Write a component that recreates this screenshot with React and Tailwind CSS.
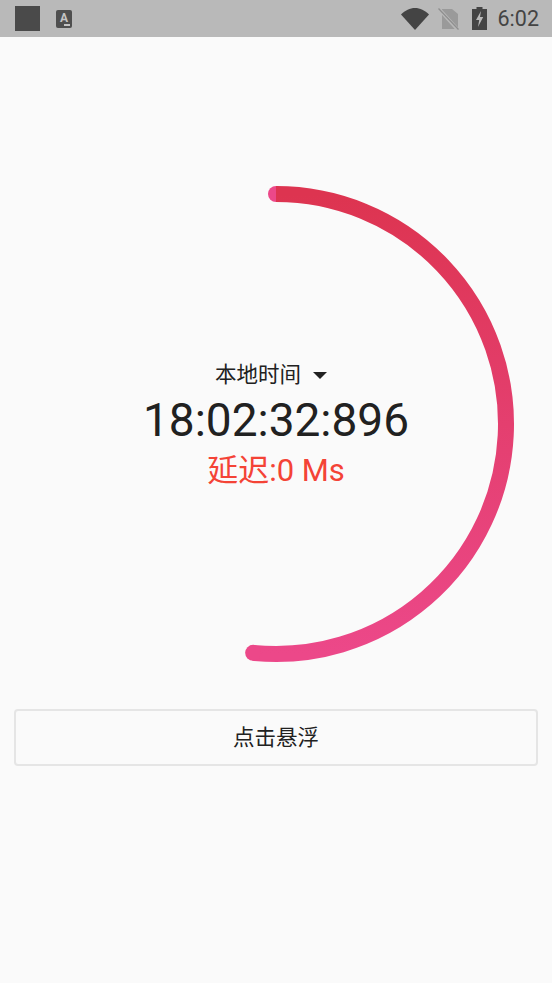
const font = "font-['Roboto','Noto_Sans_CJK_SC',sans-serif]";

function StatusBar() {
  return (
    <div className="flex h-[37px] items-center justify-between bg-[#b9b9b9] pl-[15px] pr-[13px]">
      <div className="flex items-center gap-[16px]">
        <div className="h-[25px] w-[25px] bg-[#4a4a4a]" />
        <div className="relative flex h-[18px] w-[16px] items-center justify-center rounded-[2px] bg-[#4f4f4f]">
          <span className="mb-[2px] font-['Roboto',sans-serif] text-[12px] leading-none font-bold text-[#c4c4c4]">A</span>
          <span className="absolute right-[2px] bottom-[2px] h-[1.5px] w-[6px] bg-[#c4c4c4]" />
        </div>
      </div>
      <div className="flex items-center">
        <svg width="28" height="22" viewBox="0 0 28 22" className="mr-[9px]">
          <path d="M0 6.5C4 2.5 9 0 14 0s10 2.500 14 6.500L14 22z" fill="#444444" />
        </svg>
        <svg width="21" height="22" viewBox="0 0 21 22" className="mr-[13px]">
          <path d="M4 1h10l6 5v15H4z" fill="#9a9a9a" />
          <path d="M1 1l19 21" stroke="#b9b9b9" strokeWidth="3.5" />
          <path d="M0.500 0.500l20 21" stroke="#8f8f8f" strokeWidth="1.300" />
        </svg>
        <svg width="15" height="23" viewBox="0 0 15 23" className="mr-[11px]">
          <path d="M4.500 0h6v2H15v21H0V2h4.500z" fill="#444444" />
          <path d="M9 4L4 13h3.200L6 20l5.200-10H8z" fill="#b9b9b9" />
        </svg>
        <span className="font-['Roboto',sans-serif] text-[21.500px] leading-none text-[#444444]">6:02</span>
      </div>
    </div>
  );
}

function Ring() {
  const cx = 276;
  const cy = 387;
  const r = 230;
  const endAngle = (185.7 * Math.PI) / 180;
  const endX = cx + r * Math.sin(endAngle);
  const endY = cy - r * Math.cos(endAngle);
  return (
    <svg width="552" height="640" viewBox="0 0 552 640" className="block">
      <defs>
        <linearGradient id="ring" gradientUnits="userSpaceOnUse" x1="276" y1="157" x2="276" y2="617">
          <stop offset="0" stopColor="#dd3450" />
          <stop offset="0.5" stopColor="#e43f6f" />
          <stop offset="1" stopColor="#ec4889" />
        </linearGradient>
      </defs>
      <circle cx={cx} cy={cy - r} r="8" fill="#ec4889" />
      <path
        d={`M${cx} ${cy - r}A${r} ${r} 0 1 1 ${endX} ${endY}`}
        fill="none"
        stroke="url(#ring)"
        strokeWidth="16"
      />
      <circle cx={endX} cy={endY} r="8" fill="#ec4889" />
    </svg>
  );
}

export default function App() {
  return (
    <div className={`h-[983px] w-[552px] overflow-hidden bg-[#fafafa] ${font}`}>
      <StatusBar />
      <div className="relative h-[672px]">
        <Ring />
        <div className="absolute inset-x-0 top-[324px] flex flex-col items-center">
          <div className="mr-[10px] flex h-[28px] items-center text-[21.500px] leading-none text-[#212121]">
            本地时间
            <span className="ml-[12px] h-0 w-0 border-x-[7.500px] border-t-[7.500px] border-x-transparent border-t-[#212121]" />
          </div>
          <div className="mt-[4px] text-[46px] leading-[54px] text-[#212121]">18:02:32:896</div>
          <div className="mt-[4px] text-[31px] leading-[40px] text-[#f44336]">延迟:0 Ms</div>
        </div>
      </div>
      <div className="px-[14px]">
        <button className="flex h-[57px] w-full items-center justify-center rounded-[4px] border-2 border-[#e5e5e5] pt-[2px] text-[21.500px] text-[#212121]">
          点击悬浮
        </button>
      </div>
    </div>
  );
}
